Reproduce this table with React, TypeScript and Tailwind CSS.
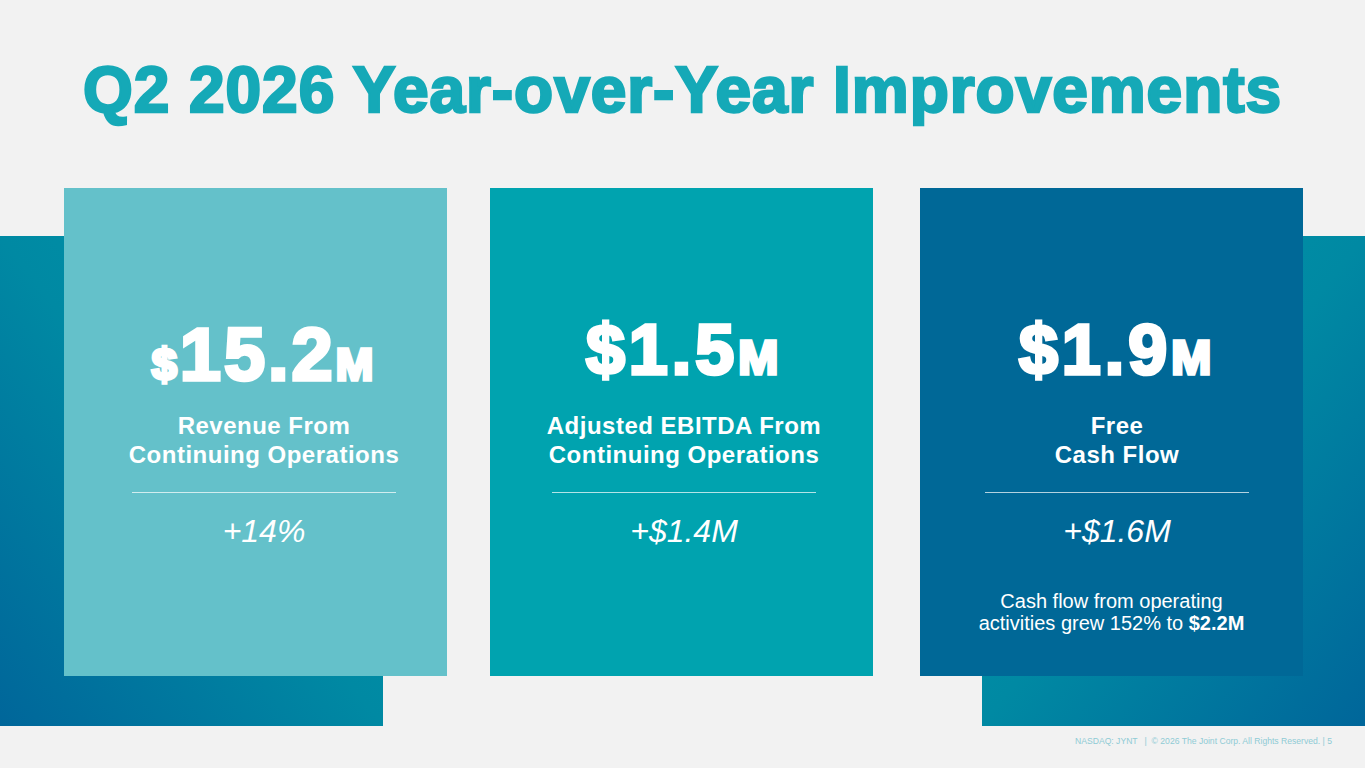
export default function App() {
  return (
    <div className="w-[1365px] h-[768px] bg-[#f2f2f2] overflow-hidden font-['Liberation_Sans',Arial,sans-serif]">
      <h1 className="pt-[58px] text-center text-[64px] leading-none font-bold text-[#15a9b7] tracking-[0.95px] [-webkit-text-stroke:2.5px_#15a9b7]">
        Q2 2026 Year-over-Year Improvements
      </h1>
      <div className="mt-[66px] grid grid-cols-[64px_319px_64px_43px_383px_47px_62px_321px_62px] grid-rows-[48px_440px_50px]">
        <div className="col-start-1 col-end-3 row-start-2 row-end-4 bg-[linear-gradient(to_bottom_left,#0098aa,#0089a3_50%,#00669a)]" />
        <div className="col-start-8 col-end-10 row-start-2 row-end-4 bg-[linear-gradient(to_bottom_right,#0098aa,#0089a3_50%,#00669a)]" />

        <div className="col-start-2 col-end-4 row-start-1 row-end-3 bg-[#64c1ca] flex flex-col items-center text-white pt-[130px] pl-[17px]">
          <div className="text-[74px] leading-none font-bold tracking-[3px] [-webkit-text-stroke:3.5px_white]">
            <span className="text-[45px]">$</span>15.2<span className="text-[45px]">M</span>
          </div>
          <div className="mt-[19px] text-center text-[24px] leading-[29px] font-bold tracking-[0.5px]">
            Revenue From
            <br />
            Continuing Operations
          </div>
          <div className="mt-[23px] w-[264px] h-px bg-white/70" />
          <div className="mt-[22px] text-[32px] leading-none italic">+14%</div>
        </div>

        <div className="col-start-5 col-end-6 row-start-1 row-end-3 bg-[#00a3af] flex flex-col items-center text-white pt-[127px] pl-[5px]">
          <div className="text-[70px] leading-none font-bold tracking-[4px] [-webkit-text-stroke:3.5px_white]">
            $1.5<span className="text-[48px]">M</span>
          </div>
          <div className="mt-[26px] text-center text-[24px] leading-[29px] font-bold tracking-[0.5px]">
            Adjusted EBITDA From
            <br />
            Continuing Operations
          </div>
          <div className="mt-[23px] w-[264px] h-px bg-white/70" />
          <div className="mt-[22px] text-[32px] leading-none italic">+$1.4M</div>
        </div>

        <div className="col-start-7 col-end-9 row-start-1 row-end-3 bg-[#006897] flex flex-col items-center text-white pt-[127px] pl-[11px]">
          <div className="text-[70px] leading-none font-bold tracking-[4px] [-webkit-text-stroke:3.5px_white]">
            $1.9<span className="text-[48px]">M</span>
          </div>
          <div className="mt-[26px] text-center text-[24px] leading-[29px] font-bold tracking-[0.5px]">
            Free
            <br />
            Cash Flow
          </div>
          <div className="mt-[23px] w-[264px] h-px bg-white/70" />
          <div className="mt-[22px] text-[32px] leading-none italic">+$1.6M</div>
          <div className="mt-[43px] mr-[11px] text-center text-[20px] leading-[22px]">
            Cash flow from operating
            <br />
            activities grew 152% to <span className="font-bold">$2.2M</span>
          </div>
        </div>
      </div>
      <div className="mt-[10px] pr-[33px] text-right text-[8.6px] leading-[10px] text-[#8fcbd5] whitespace-pre">
        {"NASDAQ: JYNT   |  © 2026 The Joint Corp. All Rights Reserved. | 5"}
      </div>
    </div>
  );
}
